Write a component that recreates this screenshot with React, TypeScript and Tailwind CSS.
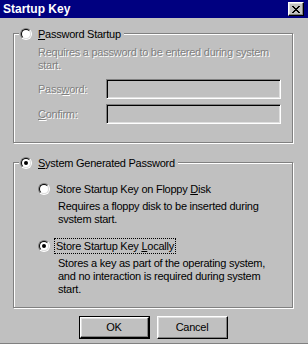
import React from 'react';

const Radio = ({ checked }: { checked?: boolean }) => (
  <span className="inline-flex w-[12px] h-[12px] shrink-0 rounded-full border border-t-[#808080] border-l-[#808080] border-r-white border-b-white">
    <span className="flex items-center justify-center w-full h-full rounded-full bg-white border border-t-black border-l-black border-r-[#dfdfdf] border-b-[#dfdfdf]">
      {checked && <span className="w-[4px] h-[4px] rounded-full bg-black" />}
    </span>
  </span>
);

const Group = ({ header, className, children }: { header: React.ReactNode; className?: string; children: React.ReactNode }) => (
  <div className={`w-[280px] border border-[#808080] shadow-[inset_1px_1px_0_#fff,1px_1px_0_#fff] ${className ?? ''}`}>
    <div className="flex -mt-[7px] ml-[5px]">
      <div className="flex items-center gap-[6px] h-[14px] bg-[#c0c0c0] pl-[1px] pr-[3px]">{header}</div>
    </div>
    {children}
  </div>
);

const Field = ({ label, className }: { label: React.ReactNode; className?: string }) => (
  <div className={`flex items-center pl-[24px] ${className ?? ''}`}>
    <span className="w-[68px] text-[#808080] [text-shadow:1px_1px_0_#fff]">{label}</span>
    <div className="w-[175px] h-[20px] border border-t-[#808080] border-l-[#808080] border-r-white border-b-white shadow-[inset_1px_1px_0_#000,inset_-1px_-1px_0_#dfdfdf]" />
  </div>
);

const Button = ({ label, isDefault }: { label: string; isDefault?: boolean }) => (
  <div className={`w-[71px] h-[23px] flex ${isDefault ? 'border border-black' : ''}`}>
    <div className="flex-1 flex items-center justify-center border border-t-white border-l-white border-r-black border-b-black shadow-[inset_-1px_-1px_0_#808080,inset_1px_1px_0_#dfdfdf]">
      {label}
    </div>
  </div>
);

export default function App() {
  return (
    <div className="w-[308px] h-[344px] overflow-hidden bg-[#c0c0c0] border-b border-[#808080] font-['Liberation_Sans',Arial,sans-serif] text-[11px] tracking-[-0.25px] text-black leading-[13px]">
      {/* title bar */}
      <div className="h-[18px] bg-[#000080] flex items-center justify-between pl-[3px] pr-[4px]">
        <span className="text-white font-bold text-[12px] tracking-normal">Startup Key</span>
        <div className="w-[16px] h-[14px] border border-t-white border-l-white border-r-black border-b-black shadow-[inset_-1px_-1px_0_#808080,inset_1px_1px_0_#dfdfdf] bg-[#c0c0c0] flex items-center justify-center">
          <svg width="8" height="7" viewBox="0 0 8 7" shapeRendering="crispEdges">
            <path d="M0 0h2v1H0zM6 0h2v1H6zM1 1h2v1H1zM5 1h2v1H5zM2 2h4v1H2zM3 3h2v1H3zM2 4h4v1H2zM1 5h2v1H1zM5 5h2v1H5zM0 6h2v1H0zM6 6h2v1H6z" fill="#000" />
          </svg>
        </div>
      </div>

      <div className="pl-[13px] pt-[15px]">
        <Group
          header={
            <>
              <Radio />
              <span>
                <u>P</u>assword Startup
              </span>
            </>
          }
        >
          <div className="pl-[24px] pr-[10px] mt-[5px] text-[#808080] [text-shadow:1px_1px_0_#fff]">
            Requires a password to be entered during system start.
          </div>
          <Field label={<>Pass<u>w</u>ord:</>} className="mt-[7px]" />
          <Field label={<><u>C</u>onfirm:</>} className="mt-[5px] mb-[18px]" />
        </Group>

        <Group
          className="mt-[19px]"
          header={
            <>
              <Radio checked />
              <span>
                <u>S</u>ystem Generated Password
              </span>
            </>
          }
        >
          <div className="flex items-center gap-[4px] pl-[24px] mt-[11px] h-[16px]">
            <Radio />
            <span className="border border-transparent px-[1px]">
              Store Startup Key on Floppy <u>D</u>isk
            </span>
          </div>
          <div className="pl-[44px] pr-[20px] mt-[3px]">
            Requires a floppy disk to be inserted during svstem start.
          </div>
          <div className="flex items-center gap-[4px] pl-[24px] mt-[12px] h-[16px]">
            <Radio checked />
            <span className="inline-block border border-dotted border-black px-[1px] leading-[14px]">
              Store Startup Key <u>L</u>ocally
            </span>
          </div>
          <div className="pl-[44px] pr-[20px] mt-[3px] mb-[11px]">
            Stores a key as part of the operating system, and no interaction is required during system start.
          </div>
        </Group>

        <div className="w-[280px] flex justify-center gap-[7px] mt-[8px]">
          <Button label="OK" isDefault />
          <Button label="Cancel" />
        </div>
      </div>
    </div>
  );
}
